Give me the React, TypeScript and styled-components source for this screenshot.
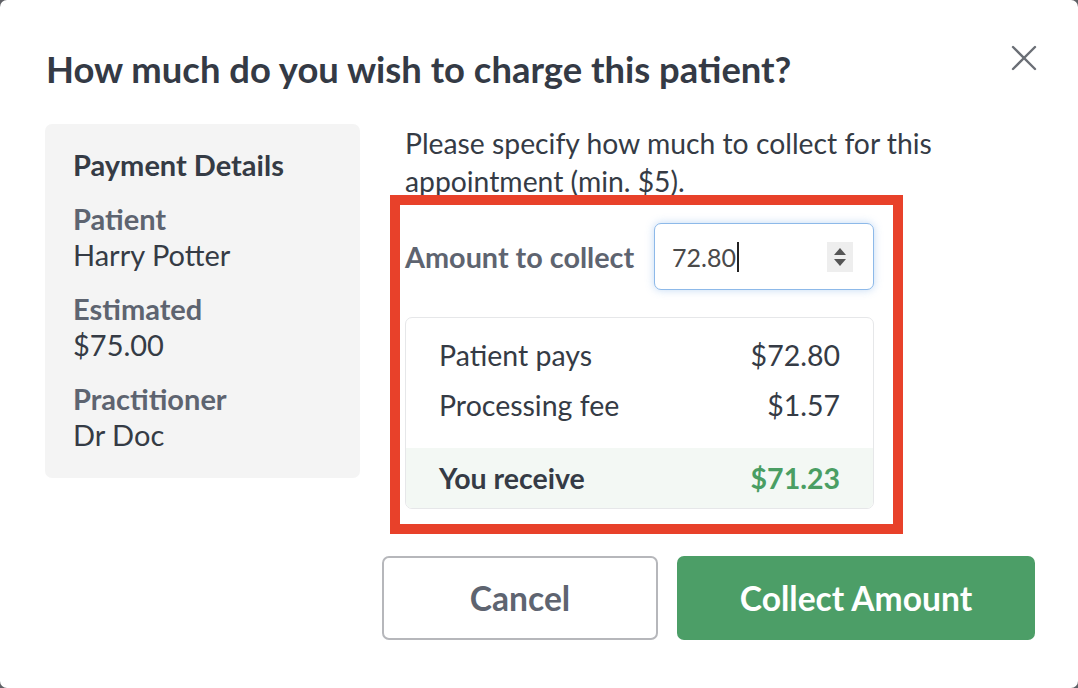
import React from "react";
import styled, { createGlobalStyle } from "styled-components";

const Global = createGlobalStyle`
  html, body { margin: 0; padding: 0; background: #5f6166; }
  body { font-family: Lato, "Open Sans", sans-serif; }
  * { box-sizing: border-box; }
`;

const Dialog = styled.div`
  width: 1078px;
  height: 688px;
  background: #ffffff;
  border-radius: 7px;
  padding: 48px 43px 0 46px;
  color: #353b45;
  overflow: hidden;
`;

const Header = styled.div`
  display: flex;
  align-items: center;
  justify-content: space-between;
  height: 44px;
`;

const Title = styled.h1`
  margin: 0;
  font-size: 36.4px;
  font-weight: 700;
  line-height: 44px;
  color: #343a45;
  margin-top: -2px;
`;

const Close = styled.button`
  width: 28px;
  height: 28px;
  padding: 0;
  border: 0;
  background: none;
  margin-right: -3px;
  margin-top: -24px;
  display: flex;
  align-items: center;
  justify-content: center;
`;

const Body = styled.div`
  display: flex;
  gap: 45px;
  margin-top: 32px;
  margin-left: -1px;
`;

const Details = styled.div`
  width: 315px;
  flex: none;
  align-self: flex-start;
  background: #f4f4f4;
  border-radius: 7px;
  padding: 23px 20px 25px 28px;
  display: flex;
  flex-direction: column;
  gap: 18px;
`;

const DetailsTitle = styled.div`
  font-size: 29px;
  font-weight: 700;
  line-height: 36px;
  color: #353b45;
`;

const Field = styled.div`
  display: flex;
  flex-direction: column;
`;

const FieldLabel = styled.div`
  font-size: 29px;
  font-weight: 700;
  line-height: 36px;
  color: #5e6470;
`;

const FieldValue = styled.div`
  font-size: 29px;
  font-weight: 400;
  line-height: 36px;
  color: #353b45;
`;

const Main = styled.div`
  flex: 1;
  display: flex;
  flex-direction: column;
`;

const Intro = styled.p`
  margin: 0;
  font-size: 28.3px;
  line-height: 38px;
  color: #353b45;
  max-width: 580px;
`;

const Highlight = styled.div`
  width: 513px;
  margin: -5px 0 0 -15px;
  border: 10px solid #e8412a;
  padding: 18px 19px 15px 5px;
  display: flex;
  flex-direction: column;
  gap: 27px;
`;

const AmountRow = styled.div`
  display: flex;
  align-items: center;
  justify-content: space-between;
`;

const AmountLabel = styled.label`
  font-size: 28.8px;
  font-weight: 700;
  color: #5e6470;
`;

const InputBox = styled.div`
  width: 220px;
  height: 67px;
  border: 1px solid #8db9e9;
  border-radius: 7px;
  box-shadow: 0 0 8px rgba(120, 170, 230, 0.45);
  display: flex;
  align-items: center;
  justify-content: space-between;
  padding: 0 20px 0 17px;
  background: #fff;
`;

const InputText = styled.span`
  font-size: 25px;
  color: #4a4a4a;
  display: flex;
  align-items: center;
`;

const Caret = styled.span`
  display: inline-block;
  width: 2px;
  height: 30px;
  background: #222;
  margin-left: 1px;
`;

const Spinner = styled.div`
  width: 26px;
  height: 30px;
  background: #eeeeee;
  display: flex;
  align-items: center;
  justify-content: center;
`;

const Summary = styled.div`
  border: 1px solid #e6e7e9;
  border-radius: 7px;
  overflow: hidden;
  padding-top: 12px;
`;

const Row = styled.div<{ $total?: boolean }>`
  display: flex;
  justify-content: space-between;
  align-items: center;
  padding: 0 33px;
  height: ${(p) => (p.$total ? "60px" : "50px")};
  margin-top: ${(p) => (p.$total ? "18px" : "0")};
  background: ${(p) => (p.$total ? "#f3f8f4" : "transparent")};
  font-size: 28.5px;
  font-weight: ${(p) => (p.$total ? 700 : 400)};
  color: #353b45;
`;

const Money = styled.span<{ $green?: boolean }>`
  color: ${(p) => (p.$green ? "#4a9e63" : "#353b45")};
`;

const Footer = styled.div`
  display: flex;
  justify-content: flex-end;
  gap: 19px;
  margin-top: 22px;
`;

const Button = styled.button<{ $primary?: boolean }>`
  height: 84px;
  border-radius: 7px;
  font-family: Lato, sans-serif;
  font-size: 33.6px;
  font-weight: 700;
  cursor: pointer;
  width: ${(p) => (p.$primary ? "358px" : "276px")};
  background: ${(p) => (p.$primary ? "#4c9e67" : "#ffffff")};
  color: ${(p) => (p.$primary ? "#ffffff" : "#5e6470")};
  border: ${(p) => (p.$primary ? "0" : "2px solid #b6b7bb")};
`;

export default function App() {
  return (
    <>
      <Global />
      <Dialog>
        <Header>
          <Title>How much do you wish to charge this patient?</Title>
          <Close aria-label="Close">
            <svg width="26" height="26" viewBox="0 0 26 26">
              <path d="M2 2 L24 24 M24 2 L2 24" stroke="#6b6f76" strokeWidth="2.4" strokeLinecap="round" />
            </svg>
          </Close>
        </Header>
        <Body>
          <Details>
            <DetailsTitle>Payment Details</DetailsTitle>
            <Field>
              <FieldLabel>Patient</FieldLabel>
              <FieldValue>Harry Potter</FieldValue>
            </Field>
            <Field>
              <FieldLabel>Estimated</FieldLabel>
              <FieldValue>$75.00</FieldValue>
            </Field>
            <Field>
              <FieldLabel>Practitioner</FieldLabel>
              <FieldValue>Dr Doc</FieldValue>
            </Field>
          </Details>
          <Main>
            <Intro>Please specify how much to collect for this appointment (min. $5).</Intro>
            <Highlight>
              <AmountRow>
                <AmountLabel>Amount to collect</AmountLabel>
                <InputBox>
                  <InputText>
                    72.80
                    <Caret />
                  </InputText>
                  <Spinner>
                    <svg width="14" height="22" viewBox="0 0 14 22">
                      <path d="M7 2 L13 9 L1 9 Z" fill="#555" />
                      <path d="M1 13 L13 13 L7 20 Z" fill="#555" />
                    </svg>
                  </Spinner>
                </InputBox>
              </AmountRow>
              <Summary>
                <Row>
                  <span>Patient pays</span>
                  <Money>$72.80</Money>
                </Row>
                <Row>
                  <span>Processing fee</span>
                  <Money>$1.57</Money>
                </Row>
                <Row $total>
                  <span>You receive</span>
                  <Money $green>$71.23</Money>
                </Row>
              </Summary>
            </Highlight>
          </Main>
        </Body>
        <Footer>
          <Button>Cancel</Button>
          <Button $primary>Collect Amount</Button>
        </Footer>
      </Dialog>
    </>
  );
}
